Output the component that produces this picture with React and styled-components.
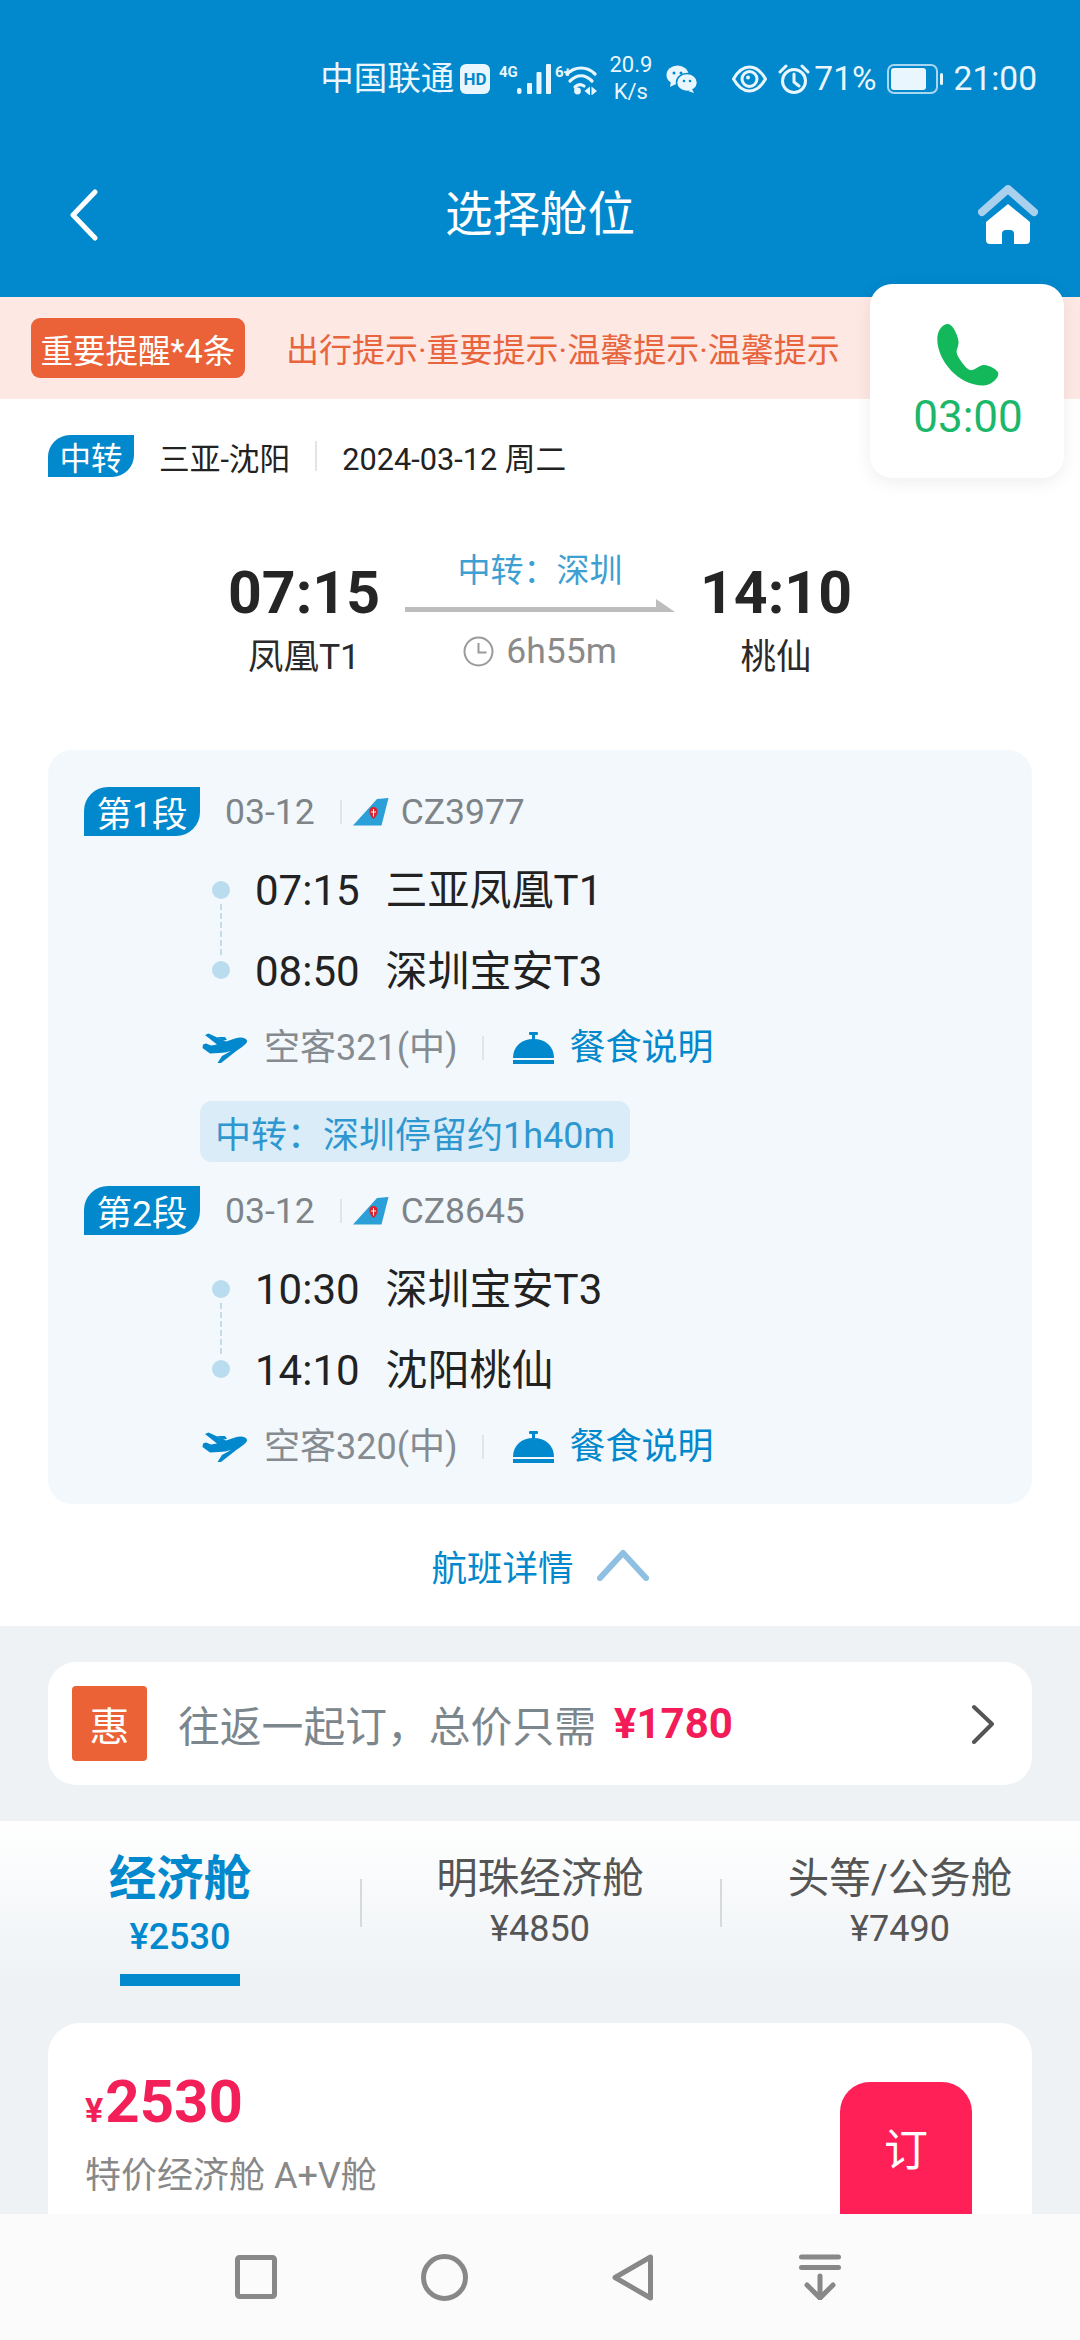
import React from "react";
import styled, { createGlobalStyle } from "styled-components";

const Global = createGlobalStyle`
  html, body { margin: 0; padding: 0; background: #eef2f5; }
  * { box-sizing: border-box; }
  body { font-family: Roboto, "Noto Sans CJK SC", sans-serif; }
`;

const Page = styled.div`
  position: relative; width: 1080px; height: 2340px; overflow: hidden;
  display: flex; flex-direction: column; background: #eef2f5;
`;
const Scroll = styled.div`flex: 1; min-height: 0; overflow: hidden;`;

const Header = styled.header`
  height: 297px; background: #0288cc; color: #fff; display: flex; flex-direction: column;
`;
const Status = styled.div`
  height: 100px; padding: 57px 43px 0 0; display: flex; justify-content: flex-end; align-items: center;
  font-size: 33.5px; line-height: 38px; color: #eaf6fd; white-space: nowrap;
`;
const StatusText = styled.span`margin-left: ${p => p.$ml || 0}px;`;
const StatusIcon = styled.svg`display: block; flex: none; margin-left: ${p => p.$ml || 0}px;`;
const Speed = styled.div`
  width: 45px; margin-left: 11px; font-size: 22px; line-height: 27px; margin-top: -1px;
  display: flex; flex-direction: column; align-items: center;
`;
const NavBar = styled.div`
  flex: 1; display: flex; align-items: center; justify-content: space-between; padding: 32px 42px 0 68px; position: relative;
`;
const Title = styled.h1`
  position: absolute; left: 0; right: 0; margin: 0; text-align: center; font-size: 47.5px; font-weight: 400; line-height: 60px;
`;

const Notice = styled.div`
  height: 102px; background: #fde8e4; display: flex; align-items: center; padding-left: 31px;
`;
const NoticeBadge = styled.span`
  width: 214px; height: 60px; border-radius: 9px; background: #eb6238; color: #fff; font-size: 32.5px;
  display: flex; align-items: center; justify-content: center; white-space: nowrap;
`;
const NoticeText = styled.span`margin-left: 41px; color: #e8643c; font-size: 33px; white-space: nowrap;`;

const CallCard = styled.div`
  position: absolute; left: 870px; top: 284px; width: 194px; height: 194px; border-radius: 22px; background: #fff;
  box-shadow: 0 4px 18px rgba(0,0,0,.07); display: flex; flex-direction: column; align-items: center; padding: 39px 0 0 2px;
`;
const CallTime = styled.div`font-size: 44px; line-height: 52px; color: #1bb76a; margin-top: 4px;`;

const Summary = styled.section`background: #fff; padding: 36px 48px 0;`;
const RouteRow = styled.div`display: flex; align-items: center; height: 42px; color: #222; font-size: 30.7px;`;
const TypeTag = styled.span`
  width: 86px; height: 42px; background: #0288cc; color: #fff; font-size: 31.5px; display: flex; align-items: center; justify-content: center;
  border-radius: 22px 0 22px 0; flex: none;
`;
const RouteName = styled.span`margin-left: 25px;`;
const VDivider = styled.span`
  flex: none; width: 2px; background: #dfe5e8; height: ${p => p.$h}px;
  margin: 0 ${p => p.$mr}px 0 ${p => p.$ml}px;
`;

const TimeLine = styled.div`
  height: 273px; display: grid; grid-template-columns: 202px 270px 202px; justify-content: center; margin: 0 -48px; padding-top: 74px;
`;
const Endpoint = styled.div`display: flex; flex-direction: column; align-items: center; margin-top: 10px;`;
const BigTime = styled.div`font-size: 59px; font-weight: 700; line-height: 60px; color: #252525; margin-top: 2px;`;
const Airport = styled.div`font-size: 35.5px; line-height: 40px; color: #2a2a2a; margin-top: 14px;`;
const Middle = styled.div`display: flex; flex-direction: column; align-items: center;`;
const Via = styled.div`font-size: 33px; line-height: 40px; color: #3ea0d2; white-space: nowrap;`;
const Duration = styled.div`display: flex; align-items: center; gap: 12px; color: #8a8a8a; font-size: 35.5px; line-height: 40px; margin-top: 19px;`;
const ArrowSvg = styled.svg`display: block; margin-top: 7px;`;

const Segments = styled.div`
  background: #f2f8fc; border-radius: 24px; height: 754px; padding: 37px 0 0 36px;
`;
const Segment = styled.div`margin-top: ${p => p.$mt || 0}px;`;
const SegHead = styled.div`display: flex; align-items: center; height: 49px;`;
const SegTag = styled.span`
  flex: none; width: 116px; height: 49px; background: #0288cc; color: #fff; font-size: 35.5px; border-radius: 24px 0 24px 0;
  display: flex; align-items: center; justify-content: center;
`;
const SegMeta = styled.span`color: #7e8488; font-size: 35.5px; margin-left: ${p => p.$ml}px;`;
const Tail = styled.svg`display: block; flex: none;`;
const Stops = styled.div`position: relative; margin-top: 14px; padding-left: 171px;`;
const StopRow = styled.div`height: 81px; line-height: 81px; display: flex; align-items: baseline; font-size: 42px; color: #222; gap: 26px; white-space: nowrap;`;
const Dot = styled.span`
  position: absolute; left: 128px; top: ${p => p.$top}px; width: 18px; height: 18px; border-radius: 50%; background: #b9dcef;
`;
const Dash = styled.span`
  position: absolute; left: 136px; top: 54px; height: 51px; border-left: 2px dashed #c2dce9;
`;
const InfoRow = styled.div`display: flex; align-items: center; height: 40px; margin-top: 16px; padding-left: 118px;`;
const InfoText = styled.span`font-size: 36px; line-height: 40px; color: ${p => p.$color}; margin-left: ${p => p.$ml}px; white-space: nowrap;`;
const Layover = styled.div`
  width: 430px; height: 61px; margin: 33px 0 0 116px; border-radius: 12px; background: #d9ecf7; color: #2f97d0; font-size: 36px;
  display: flex; align-items: center; justify-content: center; white-space: nowrap;
`;
const Details = styled.div`
  height: 122px; display: flex; align-items: center; justify-content: center; color: #0288cc; font-size: 35.5px; gap: 23px;
`;

const Promo = styled.div`
  margin: 36px 48px; height: 123px; border-radius: 28px; background: #fff; display: flex; align-items: center; padding: 0 37px 0 24px;
`;
const PromoBadge = styled.span`
  width: 75px; height: 75px; background: #ea6236; border-radius: 4px; color: #fff; font-size: 40px; display: flex; align-items: center; justify-content: center; flex: none;
`;
const PromoText = styled.span`margin-left: 31px; font-size: 41.8px; color: #7b868d; white-space: nowrap;`;
const PromoPrice = styled.span`margin-left: 18px; font-size: 42px; font-weight: 700; color: #f31c58; flex: 1; white-space: nowrap;`;

const Tabs = styled.div`
  height: 202px; background: linear-gradient(#fff 0, #eef2f5 80%); display: grid; grid-template-columns: repeat(3, 360px);
`;
const Tab = styled.div`
  position: relative; display: flex; flex-direction: column; align-items: center; padding-top: 31px; white-space: nowrap;
  &:not(:first-child)::before {
    content: ""; position: absolute; left: 0; top: 58px; width: 2px; height: 48px; background: #d5dadd;
  }
`;
const TabName = styled.div`
  font-size: ${p => p.$active ? 47.5 : 41.5}px; line-height: 54px; font-weight: ${p => p.$active ? 700 : 400}; color: ${p => p.$active ? "#0288cc" : "#555"};
`;
const TabPrice = styled.div`
  font-size: 36px; line-height: 40px; font-weight: ${p => p.$active ? 500 : 400}; color: ${p => p.$active ? "#0288cc" : "#555"}; margin-top: ${p => p.$active ? 11 : 3}px;
`;
const TabLine = styled.div`width: 120px; height: 12px; background: #0288cc; margin-top: 17px;`;

const Fare = styled.div`
  margin: 0 48px; height: 400px; background: #fff; border-radius: 32px 32px 0 0; display: flex; justify-content: space-between; padding: 54px 60px 0 37px;
`;
const FareInfo = styled.div`display: flex; flex-direction: column;`;
const FarePrice = styled.div`font-size: 60px; line-height: 50px; font-weight: 700; color: #f31f58; display: flex; align-items: baseline;`;
const FareYen = styled.span`font-size: 34px; margin-right: 2px;`;
const FareName = styled.div`font-size: 36px; line-height: 42px; color: #888; margin-top: 20px; white-space: nowrap;`;
const BookBtn = styled.div`
  width: 132px; height: 200px; margin-top: 5px; background: #fe2057; color: #fff; border-radius: 30px; font-size: 44px; text-align: center; padding-top: 33px;
`;

const BottomNav = styled.nav`flex: none; height: 126px; background: #fbfbfb; position: relative; z-index: 1;`;
const NavIcons = styled.div`
  height: 100%; padding-left: 162px; display: grid; grid-template-columns: repeat(4, 188px); justify-items: center; align-items: center;
`;
const NavIcon = styled.svg`display: block; stroke: #888; fill: none; stroke-width: 5;`;

function StatusBar() {
  return (
    <Status>
      <StatusText>中国联通</StatusText>
      <StatusIcon $ml={6} width="30" height="30" viewBox="0 0 30 30">
        <rect width="30" height="30" rx="6" fill="#eaf6fd" />
        <text x="15" y="21" textAnchor="middle" fontSize="17" fontWeight="700" fontFamily="Roboto" fill="#0288cc">HD</text>
      </StatusIcon>
      <StatusIcon $ml={9} width="52" height="32" viewBox="0 0 52 32">
        <text x="0" y="14" fontSize="15" fontWeight="700" fontFamily="Roboto" fill="#eaf6fd">4G</text>
        <g fill="#eaf6fd">
          <rect x="18" y="25" width="4.500" height="6" rx="2" />
          <rect x="28" y="20" width="5" height="11" rx="1" />
          <rect x="37.500" y="9" width="5" height="22" rx="1" />
          <rect x="47" y="1" width="5" height="30" rx="1" />
        </g>
      </StatusIcon>
      <StatusIcon $ml={4} width="42" height="32" viewBox="0 0 42 32">
        <text x="0" y="14" fontSize="15" fontWeight="700" fontFamily="Roboto" fill="#eaf6fd">6+</text>
        <g fill="none" stroke="#eaf6fd" strokeWidth="3.200" strokeLinecap="round">
          <path d="M12 11C20 3 32 3 40 11" />
          <path d="M15 18C22 11 30 11 37 18" />
          <path d="M20 24C23 21 26 21 29 23" />
        </g>
        <circle cx="22.500" cy="28" r="3.400" fill="#eaf6fd" />
        <path d="M35 23.500L29.500 28L35 32.500ZM36.500 23.500L42 28L36.500 32.500Z" fill="#eaf6fd" />
      </StatusIcon>
      <Speed><span>20.9</span><span>K/s</span></Speed>
      <StatusIcon $ml={13} width="32" height="28" viewBox="0 0 32 28">
        <ellipse cx="11.500" cy="10" rx="11" ry="9.500" fill="#eaf6fd" />
        <path d="M5 16l-1 6 6-3z" fill="#eaf6fd" />
        <ellipse cx="21" cy="17.500" rx="10.500" ry="9" fill="#eaf6fd" stroke="#0288cc" strokeWidth="1.500" />
        <path d="M26 24l2 4-6-2z" fill="#eaf6fd" />
        <circle cx="8" cy="8" r="1.500" fill="#0288cc" /><circle cx="15" cy="8" r="1.500" fill="#0288cc" />
        <circle cx="18" cy="16" r="1.300" fill="#0288cc" /><circle cx="24" cy="16" r="1.300" fill="#0288cc" />
      </StatusIcon>
      <StatusIcon $ml={34} width="35" height="28" viewBox="0 0 35 28">
        <path d="M1.500 14C6 6 11 2 17.500 2S29 6 33.500 14C29 22 24 26 17.500 26S6 22 1.500 14Z" fill="none" stroke="#eaf6fd" strokeWidth="3" />
        <circle cx="17.500" cy="14" r="7.500" fill="none" stroke="#eaf6fd" strokeWidth="3" />
        <circle cx="16" cy="12.500" r="2" fill="#eaf6fd" />
      </StatusIcon>
      <StatusIcon $ml={11} width="32" height="32" viewBox="0 0 32 32">
        <circle cx="16" cy="18" r="11.500" fill="none" stroke="#eaf6fd" strokeWidth="3" />
        <path d="M16 11v8l5 4M2 9l6-6M30 9l-6-6" fill="none" stroke="#eaf6fd" strokeWidth="3" strokeLinecap="round" />
      </StatusIcon>
      <StatusText $ml={4}>71%</StatusText>
      <StatusIcon $ml={10} width="56" height="30" viewBox="0 0 56 30">
        <rect x="1" y="1" width="49" height="28" rx="6" fill="none" stroke="#a9d6f0" strokeWidth="2" />
        <rect x="4" y="4" width="35" height="22" rx="3" fill="#eaf6fd" />
        <rect x="53" y="9" width="3" height="12" rx="1.500" fill="#eaf6fd" />
      </StatusIcon>
      <StatusText $ml={11}>21:00</StatusText>
    </Status>
  );
}

function TailLogo() {
  return (
    <Tail width="36" height="28" viewBox="0 0 36 28">
      <path d="M0 27.500 L24 1 L35.500 0 L28.500 27.500 Z" fill="#2a9fd8" />
      <path d="M20.500 9c3 0 4.600 2.400 4 5.500-.5 2.600-2 5-4 6.500-2-1.500-3.500-3.900-4-6.500-.6-3.100 1-5.500 4-5.500z" fill="#d9252f" />
      <path d="M20.500 11v7.500M18 14h5" stroke="#fff" strokeWidth="1" />
    </Tail>
  );
}

function PlaneIcon() {
  return (
    <StatusIcon width="46" height="32" viewBox="0 0 46 32">
      <path d="M45 8.500C43 5 38 5 33 6.500L24 9.500L6.500 1.500L3 3L15 12.500L9 13.500L4 11.500L1 12.500L.5 16L8 21.500L17 21C21 21 25 20 29 19L20 24L15.500 31L19 31L33 20C38 16 46 12 45 8.500Z" fill="#0288cc" />
      <path d="M15 5L23 5L25 8L21 8.500Z" fill="#0288cc" />
    </StatusIcon>
  );
}

function Bell() {
  return (
    <StatusIcon $ml={28} width="43" height="33" viewBox="0 0 43 33">
      <rect x="17" y="0" width="9" height="3" rx="1" fill="#0288cc" />
      <rect x="20" y="2" width="3" height="6" fill="#0288cc" />
      <path d="M1 26C1 14 10 7 21.500 7S42 14 42 26Z" fill="#0288cc" />
      <rect x="1" y="28" width="41" height="4" fill="#0288cc" />
    </StatusIcon>
  );
}

function SegmentBlock({ no, flight, stops, plane, mt }) {
  return (
    <Segment $mt={mt}>
      <SegHead>
        <SegTag>第{no}段</SegTag>
        <SegMeta $ml={25}>03-12</SegMeta>
        <VDivider $h={24} $ml={25} $mr={11} />
        <TailLogo />
        <SegMeta $ml={12}>{flight}</SegMeta>
      </SegHead>
      <Stops>
        <Dot $top={31} />
        <Dash />
        <Dot $top={111} />
        {stops.map(s => (
          <StopRow key={s[0]}><span>{s[0]}</span><span>{s[1]}</span></StopRow>
        ))}
      </Stops>
      <InfoRow>
        <PlaneIcon />
        <InfoText $ml={16} $color="#858b90">{plane}</InfoText>
        <VDivider $h={24} $ml={24} $mr={0} />
        <Bell />
        <InfoText $ml={15} $color="#0288cc">餐食说明</InfoText>
      </InfoRow>
    </Segment>
  );
}

export default function App() {
  return (
    <Page>
      <Global />
      <Scroll>
        <Header>
          <StatusBar />
          <NavBar>
            <svg width="30" height="52" viewBox="0 0 30 52" style={{ display: "block" }}>
              <path d="M27 3 L5 26 L27 49" fill="none" stroke="#fff" strokeWidth="5" strokeLinecap="round" strokeLinejoin="round" />
            </svg>
            <Title>选择舱位</Title>
            <svg width="60" height="60" viewBox="0 0 60 60" style={{ display: "block" }}>
              <path d="M4 27 L30 4 L56 27" fill="none" stroke="#a9d1ee" strokeWidth="8" strokeLinecap="round" strokeLinejoin="round" />
              <path d="M30 19 L52 37 V55 Q52 59 48 59 H36 V49 Q36 45 32 45 H28 Q24 45 24 49 V59 H12 Q8 59 8 55 V37 Z" fill="#fff" strokeLinejoin="round" />
            </svg>
          </NavBar>
        </Header>
        <Notice>
          <NoticeBadge>重要提醒*4条</NoticeBadge>
          <NoticeText>出行提示·重要提示·温馨提示·温馨提示</NoticeText>
        </Notice>
        <Summary>
          <RouteRow>
            <TypeTag>中转</TypeTag>
            <RouteName>三亚-沈阳</RouteName>
            <VDivider $h={30} $ml={25} $mr={25} />
            <span>2024-03-12 周二</span>
          </RouteRow>
          <TimeLine>
            <Endpoint><BigTime>07:15</BigTime><Airport>凤凰T1</Airport></Endpoint>
            <Middle>
              <Via>中转：深圳</Via>
              <ArrowSvg width="270" height="14" viewBox="0 0 270 14">
                <path d="M0 9h251V1l19 13H0z" fill="#bdbdbd" />
              </ArrowSvg>
              <Duration>
                <svg width="31" height="31" viewBox="0 0 31 31" style={{ display: "block" }}>
                  <circle cx="15.500" cy="15.500" r="14" fill="none" stroke="#9a9a9a" strokeWidth="2" />
                  <path d="M15.500 7v9.500h8" fill="none" stroke="#9a9a9a" strokeWidth="2" />
                </svg>
                <span>6h55m</span>
              </Duration>
            </Middle>
            <Endpoint><BigTime>14:10</BigTime><Airport>桃仙</Airport></Endpoint>
          </TimeLine>
          <Segments>
            <SegmentBlock no={1} flight="CZ3977" plane="空客321(中)" stops={[["07:15", "三亚凤凰T1"], ["08:50", "深圳宝安T3"]]} />
            <Layover>中转：深圳停留约1h40m</Layover>
            <SegmentBlock mt={24} no={2} flight="CZ8645" plane="空客320(中)" stops={[["10:30", "深圳宝安T3"], ["14:10", "沈阳桃仙"]]} />
          </Segments>
          <Details>
            <span>航班详情</span>
            <svg width="52" height="32" viewBox="0 0 52 32" style={{ display: "block" }}>
              <path d="M3 29 L26 4 L49 29" fill="none" stroke="#8fc0e2" strokeWidth="6" strokeLinecap="round" strokeLinejoin="round" />
            </svg>
          </Details>
        </Summary>
        <Promo>
          <PromoBadge>惠</PromoBadge>
          <PromoText>往返一起订，总价只需</PromoText>
          <PromoPrice>¥1780</PromoPrice>
          <svg width="24" height="40" viewBox="0 0 24 40" style={{ display: "block" }}>
            <path d="M3 3 L21 20 L3 38" fill="none" stroke="#555" strokeWidth="4" strokeLinecap="round" strokeLinejoin="round" />
          </svg>
        </Promo>
        <Tabs>
          <Tab>
            <TabName $active>经济舱</TabName>
            <TabPrice $active>¥2530</TabPrice>
            <TabLine />
          </Tab>
          <Tab><TabName>明珠经济舱</TabName><TabPrice>¥4850</TabPrice></Tab>
          <Tab><TabName>头等/公务舱</TabName><TabPrice>¥7490</TabPrice></Tab>
        </Tabs>
        <Fare>
          <FareInfo>
            <FarePrice><FareYen>¥</FareYen>2530</FarePrice>
            <FareName>特价经济舱 A+V舱</FareName>
          </FareInfo>
          <BookBtn>订</BookBtn>
        </Fare>
      </Scroll>
      <CallCard>
        <svg width="64" height="64" viewBox="0 0 64 64" style={{ display: "block" }}>
          <path d="M12 1C6 1 1 8 1.300 17C2 38 22 62 47 62.500C54 62.500 63 56 62.300 50C62 47 52 41 47 42C42 43 38 48 34 47C30 46 22 35 20.700 30C20 27 23 23 22.500 18C22 13 17 1 12 1Z" fill="#12b85a" />
        </svg>
        <CallTime>03:00</CallTime>
      </CallCard>
      <BottomNav>
        <NavIcons>
          <NavIcon width="42" height="44" viewBox="0 0 42 44"><rect x="2.500" y="2.500" width="37" height="39" rx="2" /></NavIcon>
          <NavIcon width="47" height="47" viewBox="0 0 47 47"><circle cx="23.500" cy="23.500" r="21" /></NavIcon>
          <NavIcon width="41" height="47" viewBox="0 0 41 47" strokeLinejoin="round"><path d="M38.500 3 V44 L3 23.500 Z" /></NavIcon>
          <NavIcon width="42" height="46" viewBox="0 0 42 46" strokeLinecap="round">
            <path d="M2.500 3H39.500M2.500 13.500H39.500M21 22V44M8 31L21 44L34 31" />
          </NavIcon>
        </NavIcons>
      </BottomNav>
    </Page>
  );
}
